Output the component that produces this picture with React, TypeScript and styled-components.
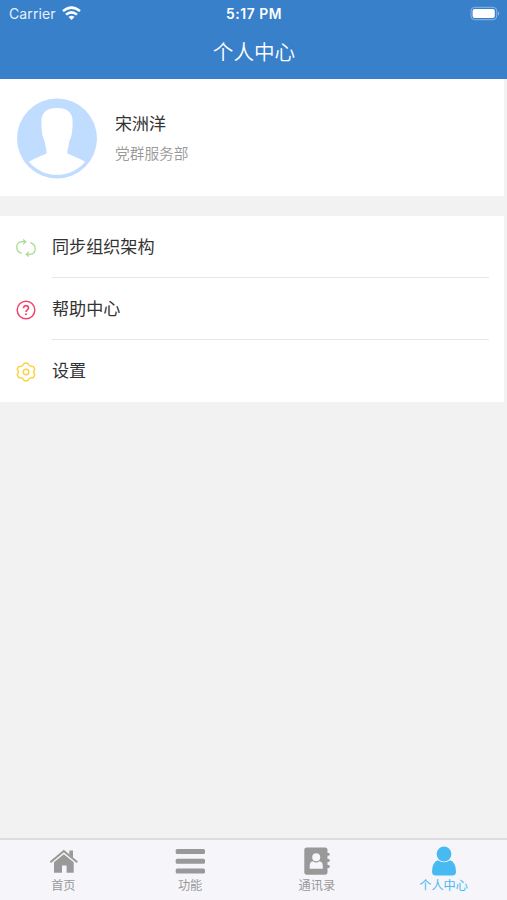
import React from "react";
import styled, { createGlobalStyle } from "styled-components";

const GlobalStyle = createGlobalStyle`
  * { box-sizing: border-box; }
  body {
    margin: 0;
    background: #f2f2f2;
    font-family: Inter, "Noto Sans CJK SC", sans-serif;
  }
`;

const Screen = styled.div`
  display: flex;
  flex-direction: column;
  width: 100%;
  height: 900px;
  overflow: hidden;
  background: #f2f2f2;
`;

const Header = styled.header`
  flex: none;
  height: 79px;
  background: #3980cb;
  color: #fff;
`;

const StatusBar = styled.div`
  display: grid;
  grid-template-columns: 1fr auto 1fr;
  align-items: center;
  height: 27px;
  padding: 0 7px 0 9px;
`;

const Carrier = styled.div`
  display: flex;
  align-items: center;
  gap: 6px;
  font-size: 14px;
  line-height: 20px;
  letter-spacing: 0.12px;
  color: #e6f0fb;
`;

const Clock = styled.div`
  font-size: 13.8px;
  font-weight: 600;
  line-height: 20px;
  letter-spacing: 0.55px;
  margin-right: 1px;
`;

const BatterySlot = styled.div`
  display: flex;
  justify-content: flex-end;
`;

const Title = styled.h1`
  margin: 0;
  padding-left: 1px;
  font-family: "Noto Sans CJK SC", sans-serif;
  font-size: 20.6px;
  font-weight: 350;
  line-height: 48px;
  text-align: center;
`;

const Profile = styled.section`
  flex: none;
  display: flex;
  align-items: center;
  gap: 17px;
  width: calc(100% - 3px);
  height: 117px;
  padding: 1px 0 0 17px;
  background: #fff;
`;

const ProfileText = styled.div`
  display: flex;
  flex-direction: column;
  gap: 6px;
  padding-top: 2px;
`;

const Name = styled.div`
  font-size: 17px;
  line-height: 24px;
  color: #333;
`;

const Department = styled.div`
  font-size: 14.7px;
  font-weight: 350;
  line-height: 24px;
  color: #999;
`;

const Menu = styled.ul`
  flex: none;
  width: calc(100% - 3px);
  margin: 20px 0 0;
  padding: 0;
  list-style: none;
  background: #fff;
`;

const MenuRow = styled.li`
  display: flex;
  align-items: center;
  gap: 16px;
  height: 62px;
  padding: 0 15px 0 16px;

  svg { margin-top: 1px; }
`;

const MenuLabel = styled.span<{ $divider: boolean }>`
  flex: 1;
  height: 62px;
  border-bottom: 1px solid ${(p) => (p.$divider ? "#e7e7e7" : "transparent")};
  font-size: 17.1px;
  line-height: 62px;
  color: #333;
`;

const Filler = styled.div`
  flex: 1;
`;

const TabBar = styled.nav`
  flex: none;
  display: grid;
  grid-template-columns: repeat(4, 1fr);
  height: 62px;
  border-top: 2px solid #dcdcde;
  background: #f5f5fa;
`;

const Tab = styled.div<{ $active?: boolean }>`
  display: flex;
  flex-direction: column;
  align-items: center;
  padding-top: 6px;
  font-size: 12.2px;
  line-height: 19px;
  color: ${(p) => (p.$active ? "#48b9f1" : "#999")};

  svg { display: block; flex: none; }
`;

const WifiIcon = () => (
  <svg width="19" height="15" viewBox="0 0 19 15" fill="none" stroke="#fff" strokeWidth="2.5">
    <path d="M1 5.1Q9.5-1.9 18 5.1" />
    <path d="M4 8.6Q9.5 4.1 15 8.6" />
    <path d="M6.5 11Q9.5 8.4 12.5 11L9.5 14Z" fill="#fff" stroke="none" />
  </svg>
);

const BatteryIcon = () => (
  <svg width="31" height="15" viewBox="0 0 31 15">
    <rect x="2" y="1.3" width="25.8" height="12.4" rx="3.8" fill="none" stroke="#8ab7e6" strokeWidth="1" />
    <rect x="3.6" y="3" width="22.2" height="9" rx="2" fill="#fff" />
    <path d="M29 5.2Q31.2 7.5 29 9.8Z" fill="#8ab7e6" />
  </svg>
);

const Avatar = () => (
  <svg width="81" height="81" viewBox="0 0 81 81">
    <circle cx="40" cy="40.5" r="40" fill="#c0dcff" />
    <path
      d="M40 10C30 10 24.4 14.5 24.4 23C24.4 28 24.6 33 25.4 37C26 40 27.6 42 28 45C28.4 49 29.8 52 29.6 55.5C24 58 18 60 11.8 63.8A37 37 0 0 0 68.2 63.8C62 60 56 58 50.4 55.5C50.2 52 51.6 49 52 45C52.4 42 54 40 54.6 37C55.4 33 55.6 28 55.6 23C55.6 14.5 50 10 40 10Z"
      fill="#fff"
    />
  </svg>
);

const SyncIcon = () => (
  <svg width="20" height="20" viewBox="0 0 20 20" fill="none" stroke="#a9dc91" strokeWidth="1.3">
    <path d="M5.6 15.4C-1.2 13-.6 4.2 6 3.7H9.6M7.2 1.4L9.7 3.7L7.2 6.1" />
    <path d="M14.4 4.6C21.2 7 20.6 15.8 14 16.3H10.4M12.8 13.9L10.3 16.3L12.8 18.6" />
  </svg>
);

const HelpIcon = () => (
  <svg width="20" height="20" viewBox="0 0 20 20" fill="none" stroke="#ee456e">
    <circle cx="10" cy="10" r="8.8" strokeWidth="1.5" />
    <path d="M7.5 8.2C7.4 4.8 12.6 4.9 12.5 8C12.5 9.9 10 9.8 10 12.1" strokeWidth="1.7" />
    <circle cx="10" cy="14.2" r="1.05" fill="#ee456e" stroke="none" />
  </svg>
);

const GearIcon = () => (
  <svg width="20" height="20" viewBox="0 0 20 20" fill="none" stroke="#fbd349" strokeWidth="1.5" strokeLinejoin="round">
    <path d="M8.3 1.3H11.7L13.2 3.4L14.6 4.2L17.2 4.4L18.8 7.3L17.7 9.4V10.8L18.8 12.8L17.2 15.7L14.6 15.8L13.2 16.6L11.7 18.8H8.3L6.8 16.6L5.4 15.8L2.8 15.7L1.2 12.8L2.3 10.8V9.4L1.2 7.3L2.8 4.4L5.4 4.2L6.8 3.4Z" />
    <circle cx="10" cy="10" r="2.8" />
  </svg>
);

const HomeIcon = () => (
  <svg width="30" height="30" viewBox="0 0 30 30" fill="#999">
    <path d="M6 16.3L15.8 8.2L25.7 16.3V26.8H18.6V19.6H14V26.8H6Z" />
    <path d="M3 15.7L15.8 5L28.7 15.7" fill="none" stroke="#999" strokeWidth="2.1" strokeLinecap="round" />
    <path d="M21.3 4.5H25V11.8L21.3 8.5Z" />
  </svg>
);

const ListIcon = () => (
  <svg width="30" height="30" viewBox="0 0 30 30" fill="#999">
    <rect x=".7" y="3" width="29.3" height="5" rx="1.5" />
    <rect x=".7" y="12.8" width="29.3" height="5" rx="1.5" />
    <rect x=".7" y="22.6" width="29.3" height="5" rx="1.5" />
  </svg>
);

const ContactsIcon = () => (
  <svg width="30" height="30" viewBox="0 0 30 30">
    <path
      d="M4.8 1.5H23Q25.5 1.5 25.5 4V7H26.5Q27.8 7 27.8 8.3T26.5 9.8H25.5V13H26.5Q27.8 13 27.8 14.4T26.5 15.9H25.5V19H26.5Q27.8 19 27.8 20.5T26.5 22H25.5V26Q25.5 28.7 23 28.7H4.8Q2.3 28.7 2.3 26V4Q2.3 1.5 4.8 1.5Z"
      fill="#999"
    />
    <circle cx="14.2" cy="11.2" r="4" fill="#f5f5fa" />
    <path d="M7.7 22.7V20Q7.7 15.5 10.9 15.2Q14.2 17.6 17.4 15.2Q20.8 15.5 20.8 20V22.7Z" fill="#f5f5fa" />
  </svg>
);

const PersonIcon = () => (
  <svg width="30" height="30" viewBox="0 0 30 30" fill="#48b9f1">
    <circle cx="15" cy="8" r="7.4" />
    <path d="M8.8 14.2Q15 18.2 21.2 14.2Q27 16.5 27 25.5Q27 29.4 23.5 29.4H6.5Q3 29.4 3 25.5Q3 16.5 8.8 14.2Z" />
  </svg>
);

const menuItems = [
  { label: "同步组织架构", Icon: SyncIcon },
  { label: "帮助中心", Icon: HelpIcon },
  { label: "设置", Icon: GearIcon },
];

const tabs = [
  { label: "首页", Icon: HomeIcon },
  { label: "功能", Icon: ListIcon },
  { label: "通讯录", Icon: ContactsIcon },
  { label: "个人中心", Icon: PersonIcon, active: true },
];

export default function App() {
  return (
    <Screen lang="zh-CN">
      <GlobalStyle />
      <Header>
        <StatusBar>
          <Carrier>
            Carrier
            <WifiIcon />
          </Carrier>
          <Clock>5:17 PM</Clock>
          <BatterySlot>
            <BatteryIcon />
          </BatterySlot>
        </StatusBar>
        <Title>个人中心</Title>
      </Header>
      <Profile>
        <Avatar />
        <ProfileText>
          <Name>宋洲洋</Name>
          <Department>党群服务部</Department>
        </ProfileText>
      </Profile>
      <Menu>
        {menuItems.map(({ label, Icon }, i) => (
          <MenuRow key={label}>
            <Icon />
            <MenuLabel $divider={i < menuItems.length - 1}>{label}</MenuLabel>
          </MenuRow>
        ))}
      </Menu>
      <Filler />
      <TabBar>
        {tabs.map(({ label, Icon, active }) => (
          <Tab key={label} $active={active}>
            <Icon />
            {label}
          </Tab>
        ))}
      </TabBar>
    </Screen>
  );
}
